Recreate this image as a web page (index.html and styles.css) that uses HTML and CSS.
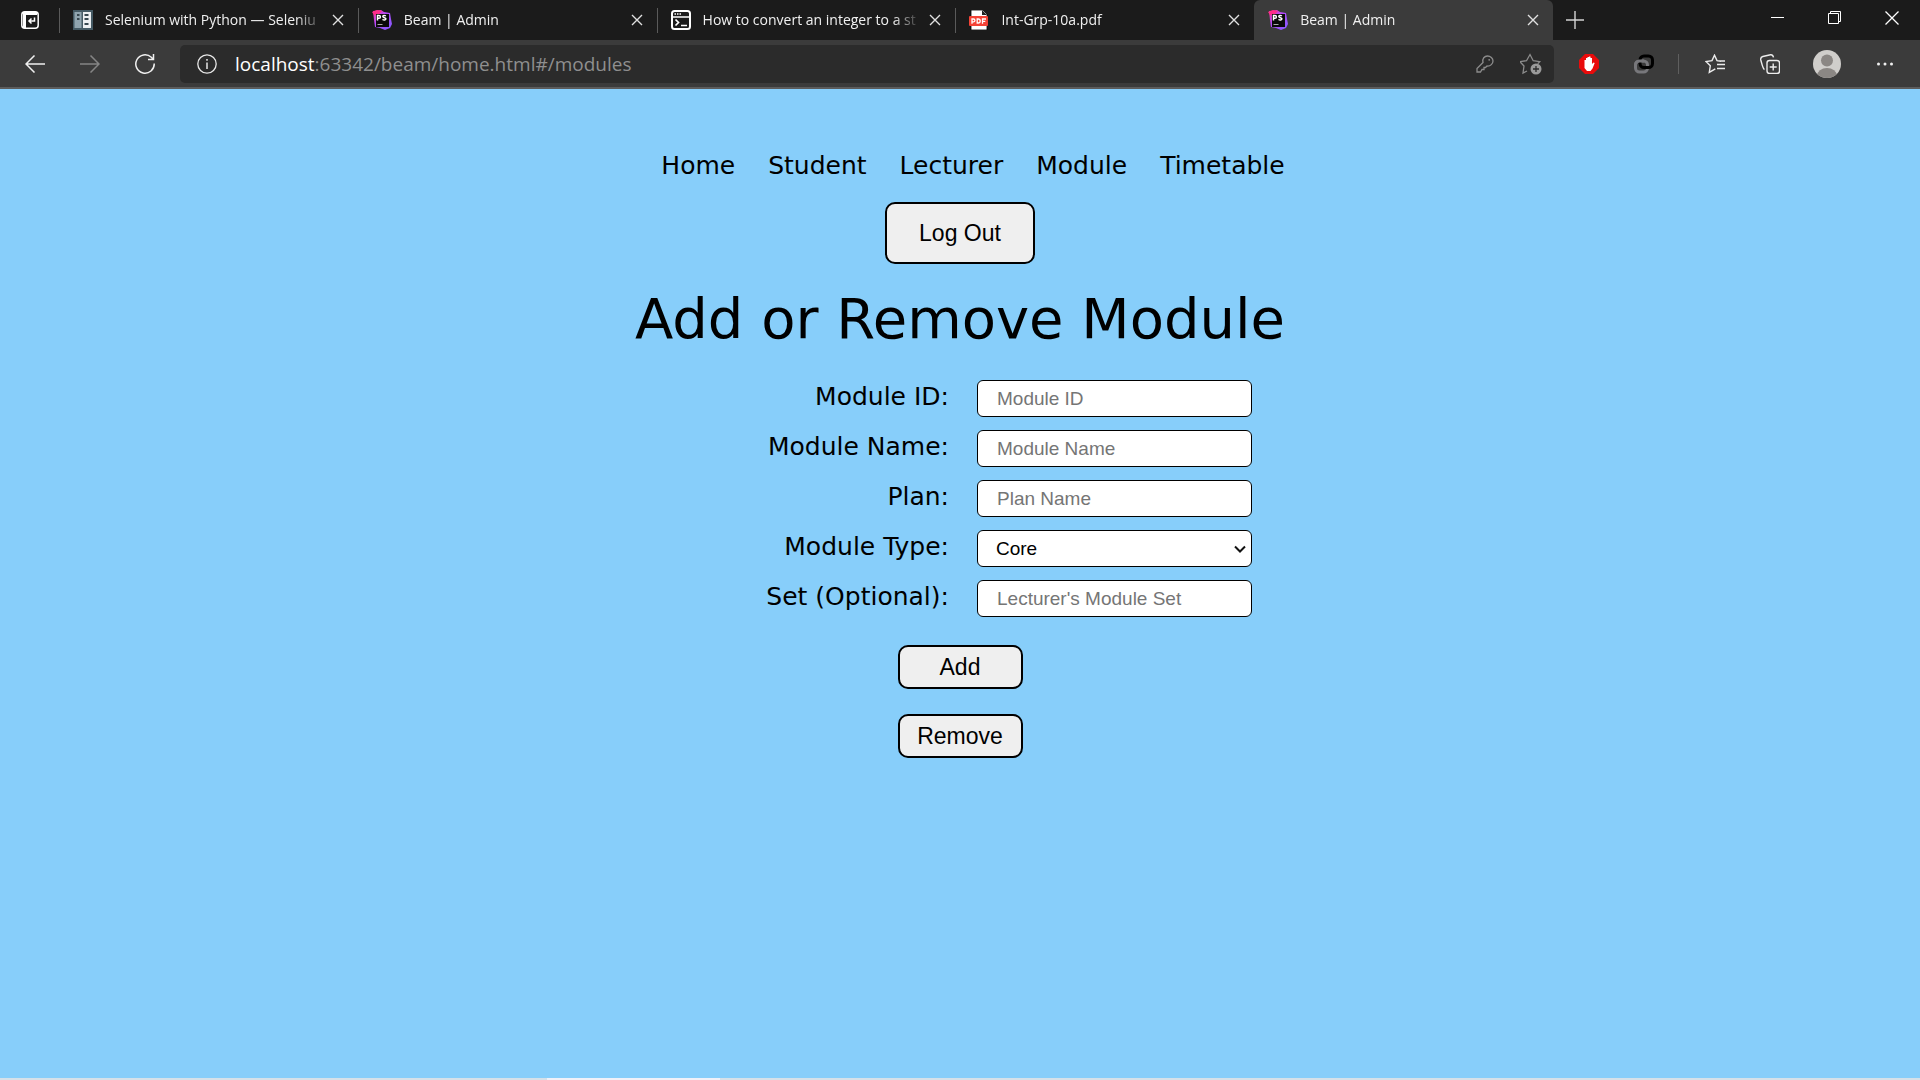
FILE: index.html
```html
<!DOCTYPE html>
<html lang="en">
<head>
<meta charset="utf-8">
<title>Beam | Admin</title>
<link rel="stylesheet" href="styles.css">
</head>
<body>
<svg class="defs" aria-hidden="true">
  <defs>
    <linearGradient id="ps-grad" x1="0" y1="0" x2="1" y2="1">
      <stop offset="0" stop-color="#ff318c"/><stop offset=".4" stop-color="#b74af7"/><stop offset="1" stop-color="#7f5cff"/>
    </linearGradient>
    <symbol id="i-close" viewBox="0 0 12 12"><path d="M1 1l10 10M11 1L1 11" fill="none" stroke="currentColor" stroke-width="1.4"/></symbol>
    <symbol id="i-storm" viewBox="0 0 20 20">
      <path d="M1 1l8-1 3 2 6 1 1 6 1 5-2 4-5 2-5-2-5-1-1-7z" fill="url(#ps-grad)"/>
      <path d="M0 2l5-2 5 1-4 4H2z" fill="#ff2d8a"/>
      <rect x="4" y="4" width="13" height="13" fill="#0a0a0a"/>
      <path d="M5.500 10.500v-5h1.500a1.400 1.400 0 0 1 0 2.800H5.500M13.800 6c-1-.8-3-.6-3 .6 0 1.400 3.100.8 3.100 2.200 0 1.400-2.100 1.500-3.400.5" fill="none" stroke="#fff" stroke-width="1.500"/>
      <path d="M5.500 14.500h5" stroke="#aaa" stroke-width="1"/>
    </symbol>
  </defs>
</svg>

<header class="browser">
  <div class="tabstrip">
    <button class="tab-menu" aria-label="Tab actions"><svg width="18" height="18" viewBox="0 0 18 18"><rect x=".8" y=".8" width="16.400" height="16.400" rx="3" fill="none" stroke="#fff" stroke-width="1.500"/><path d="M2 1h14v3H5v13H2z" fill="#fff"/><path d="M13.500 6.500v3.500H8M10.500 7.500L8 10l2.500 2.500" fill="none" stroke="#fff" stroke-width="1.500"/></svg></button>
    <div class="tabs">
      <div class="tab">
        <svg class="favicon" viewBox="0 0 20 20"><path fill="#455a64" d="M0 0h20v20H0z"/><path fill="#90a4ae" d="M1.500 2h7v16h-7z"/><path fill="#eceff1" d="M10 2h8v16h-8z"/><path fill="#37474f" d="M4 4h2.500v2H4zM4 8h2.500v2H4zM11.500 4h4v2h-4zM11.500 8h4v2h-4zM11.500 13h4v2h-4z"/></svg>
        <span class="tab-title">Selenium with Python — Seleniu</span>
        <button class="tab-close" aria-label="Close tab"><svg width="12" height="12"><use href="#i-close"/></svg></button>
      </div>
      <div class="tab">
        <svg class="favicon"><use href="#i-storm"/></svg>
        <span class="tab-title">Beam | Admin</span>
        <button class="tab-close" aria-label="Close tab"><svg width="12" height="12"><use href="#i-close"/></svg></button>
      </div>
      <div class="tab">
        <svg class="favicon" viewBox="0 0 20 20" fill="none" stroke="#fff"><rect x="1" y="1" width="18" height="18" rx="2.500" stroke-width="2"/><path d="M1 7h18" stroke-width="1.500"/><path d="M3.500 4h7" stroke-width="1.500" stroke-dasharray="1.500 1"/><path d="M4.500 9.500l3 3-3 3M10 15.500h6" stroke-width="1.700"/></svg>
        <span class="tab-title">How to convert an integer to a st</span>
        <button class="tab-close" aria-label="Close tab"><svg width="12" height="12"><use href="#i-close"/></svg></button>
      </div>
      <div class="tab">
        <svg class="favicon" viewBox="0 0 20 20"><path d="M2 0h12l4 4v16H2z" fill="#fff" stroke="#000" stroke-width=".8"/><path d="M13 0v5h5z" fill="#222"/><rect y="6" width="19" height="10" rx="1" fill="#f44336"/><path d="M3 13.800V9h1.500a1.300 1.300 0 0 1 0 2.800H3M8.200 9v4h1a1.800 1.800 0 0 0 0-4zM13.500 13.800V9H17M13.500 11.300h2.800" fill="none" stroke="#fff" stroke-width="1.300"/></svg>
        <span class="tab-title">Int-Grp-10a.pdf</span>
        <button class="tab-close" aria-label="Close tab"><svg width="12" height="12"><use href="#i-close"/></svg></button>
      </div>
      <div class="tab tab-active">
        <svg class="favicon"><use href="#i-storm"/></svg>
        <span class="tab-title">Beam | Admin</span>
        <button class="tab-close" aria-label="Close tab"><svg width="12" height="12"><use href="#i-close"/></svg></button>
      </div>
    </div>
    <button class="new-tab" aria-label="New tab"><svg width="18" height="18" viewBox="0 0 18 18"><path d="M9 0v18M0 9h18" stroke="#d4d4d4" stroke-width="1.400"/></svg></button>
    <div class="window-controls">
      <button aria-label="Minimize"><svg width="14" height="14" viewBox="0 0 14 14"><path d="M0 6.500h13" stroke="#fff"/></svg></button>
      <button aria-label="Restore"><svg width="14" height="14" viewBox="0 0 14 14" fill="none" stroke="#fff"><path d="M.5 2.500h10v10H.5zM2.500 2.500v-2h10v10h-2"/></svg></button>
      <button aria-label="Close window"><svg width="14" height="14" viewBox="0 0 14 14"><path d="M.5 .5l13 13M13.500 .5l-13 13" stroke="#fff" stroke-width="1.300"/></svg></button>
    </div>
  </div>

  <div class="toolbar">
    <button aria-label="Back"><svg width="20" height="18" viewBox="0 0 20 18" fill="none" stroke="#f0f0f0" stroke-width="1.500"><path d="M20 9H1M9.500 .5L1 9l8.500 8.500"/></svg></button>
    <button aria-label="Forward"><svg width="20" height="18" viewBox="0 0 20 18" fill="none" stroke="#858585" stroke-width="1.500"><path d="M0 9h19M10.500 .5L19 9l-8.500 8.500"/></svg></button>
    <button aria-label="Refresh"><svg width="20" height="20" viewBox="0 0 20 20" fill="none" stroke="#f0f0f0" stroke-width="1.500"><path d="M19.200 9.500A9.200 9.200 0 1 1 16.300 3.300L18 5M18.500 0v5.500H13"/></svg></button>
    <div class="address">
      <svg class="info" width="20" height="20" viewBox="0 0 20 20"><circle cx="10" cy="10" r="9.200" fill="none" stroke="#e8e8e8" stroke-width="1.300"/><path d="M10 8.500V15M10 5v1.800" stroke="#e8e8e8" stroke-width="1.500"/></svg>
      <span class="url"><span class="host">localhost</span>:63342/beam/home.html#/modules</span>
      <button class="address-action" aria-label="Saved passwords"><svg width="18" height="18" viewBox="0 0 18 18" fill="none" stroke="#8c8c8c" stroke-width="1.300"><path d="M7 7.500C6 3.500 8.500 1 11.500 1S17 3.500 17 6s-2.500 5.500-6 5L9.500 12.500H8v2H6L4.500 17H1v-3.500z"/><circle cx="13.200" cy="4.800" r=".9" fill="#8c8c8c" stroke="none"/></svg></button>
      <button class="address-action" aria-label="Add to favorites"><svg width="22" height="22" viewBox="0 0 22 22"><path d="M7 18l-4 2 1-7-4-4.300 6.500-1L10 1.500l3.200 6.200 6.500 1-2 2" fill="none" stroke="#8c8c8c" stroke-width="1.300"/><circle cx="16" cy="16" r="5.500" fill="#9a9a9a"/><path d="M16 13v6M13 16h6" stroke="#2b2b2b" stroke-width="1.300"/></svg></button>
    </div>
    <div class="extensions">
      <button aria-label="Ad blocker"><svg width="20" height="20" viewBox="0 0 20 20"><path d="M6 0h8l6 6v8l-6 6H6l-6-6V6z" fill="#e90b0b"/><path d="M5.500 6h1.500V4H8.500V3h1.500v-.5h1.500V4H13v6l1.500-1.500 1.200.5-2.200 5.500-2 2.500H8L5.500 14z" fill="#fff"/></svg></button>
      <button aria-label="Link extension"><svg width="20" height="20" viewBox="0 0 20 20" fill="none" stroke-width="3"><rect x="1.500" y="7" width="12" height="11" rx="4" stroke="#77777b"/><rect x="6" y="2" width="12.500" height="11.500" rx="4" stroke="#000"/><path d="M1.500 12v-1a4 4 0 0 1 4-4H10" stroke="#77777b"/></svg></button>
      <span class="divider"></span>
      <button aria-label="Favorites"><svg width="20" height="20" viewBox="0 0 20 20" fill="none" stroke="#ececec" stroke-width="1.400"><path d="M16 7.300l-4-.7L9.500 1.200 7 6.600l-6 .9 4.300 4.300-1 6.500 6-3.500M12 10.500h8M12 14.500h8M14 7h6"/></svg></button>
      <button aria-label="Collections"><svg width="20" height="20" viewBox="0 0 20 20" fill="none" stroke="#ececec" stroke-width="1.400"><rect x="7" y="6.500" width="12.500" height="13" rx="2.500"/><path d="M13.200 9.500v7M9.700 13h7M4.500 15.500C3 15 2.500 12.500 .8 6c-.4-2 .2-3 2-3.500L10.500 .8c1.500-.2 2.500.5 3 2.500"/></svg></button>
      <button class="profile" aria-label="Profile"><svg width="28" height="28" viewBox="0 0 28 28"><defs><clipPath id="face"><circle cx="14" cy="14" r="14"/></clipPath></defs><g clip-path="url(#face)"><path fill="#d0cecb" d="M0 0h28v28H0z"/><circle cx="14" cy="10.500" r="6" fill="#8b8784"/><ellipse cx="14" cy="26" rx="10" ry="8" fill="#8b8784"/></g></svg></button>
      <button aria-label="Settings and more"><svg width="18" height="4" viewBox="0 0 18 4" fill="#f0f0f0"><circle cx="2.500" cy="2" r="1.500"/><circle cx="9" cy="2" r="1.500"/><circle cx="15.500" cy="2" r="1.500"/></svg></button>
    </div>
  </div>
</header>

<main class="page">
  <nav class="site-nav">
    <a href="#/">Home</a>
    <a href="#/student">Student</a>
    <a href="#/lecturer">Lecturer</a>
    <a href="#/modules">Module</a>
    <a href="#/timetable">Timetable</a>
  </nav>
  <button class="btn btn-logout">Log Out</button>
  <h1>Add or Remove Module</h1>
  <form class="module-form">
    <div class="fields">
      <label for="module-id">Module ID:</label>
      <div class="field"><input id="module-id" type="text" placeholder="Module ID"></div>
      <label for="module-name">Module Name:</label>
      <div class="field"><input id="module-name" type="text" placeholder="Module Name"></div>
      <label for="plan">Plan:</label>
      <div class="field"><input id="plan" type="text" placeholder="Plan Name"></div>
      <label for="module-type">Module Type:</label>
      <div class="field"><select id="module-type"><option>Core</option><option>Optional</option></select><svg class="chevron" width="12" height="8" viewBox="0 0 12 8"><path d="M1 1.500l5 5 5-5" fill="none" stroke="#111" stroke-width="2"/></svg></div>
      <label for="module-set">Set (Optional):</label>
      <div class="field"><input id="module-set" type="text" placeholder="Lecturer's Module Set"></div>
    </div>
    <button class="btn" type="button">Add</button>
    <button class="btn" type="button">Remove</button>
  </form>
</main>
<footer class="edge"><span class="edge-light"></span></footer>
</body>
</html>
```
FILE: styles.css
```css
* {
  box-sizing: border-box;
}

body {
  margin: 0;
  min-height: 100vh;
  display: flex;
  flex-direction: column;
  background: #87cefa;
  color: #000;
  font-family: Verdana, "DejaVu Sans", sans-serif;
  font-size: 25px;
  line-height: 30px;
}

.defs {
  position: absolute;
  width: 0;
  height: 0;
}

/* Browser frame */
.browser {
  background: #3b3b3b;
  border-bottom: 2px solid #5c5c5c;
  font-family: "Segoe UI", "Open Sans", sans-serif;
}

.browser button {
  display: flex;
  align-items: center;
  justify-content: center;
  flex: none;
  padding: 0;
  border: 0;
  background: none;
  color: #e0e0e0;
}

.tabstrip {
  display: flex;
  height: 40px;
  background: #1b1b1b;
}

.browser .tab-menu {
  width: 59px;
}

.tabs {
  display: flex;
  flex: 0 1 1494px;
  min-width: 0;
}

.tab {
  display: flex;
  align-items: center;
  flex: 1 1 0;
  min-width: 0;
  padding: 0 10px 0 14px;
  background: linear-gradient(#5a5a5a, #5a5a5a) 0 8px / 1px 25px no-repeat;
}

.tab-active {
  border-radius: 6px 6px 0 0;
  background: #3b3b3b;
}

.favicon {
  flex: none;
  width: 20px;
  height: 20px;
}

.tab-title {
  flex: 1;
  min-width: 0;
  margin: 0 4px 0 12px;
  overflow: hidden;
  white-space: nowrap;
  color: #f0f0f0;
  font-size: 14px;
  line-height: 20px;
  mask-image: linear-gradient(to left, transparent, #000 28px);
}

.browser .tab-close {
  width: 20px;
  height: 20px;
}

.browser .new-tab {
  width: 44px;
}

.window-controls {
  display: flex;
  margin-left: auto;
}

.browser .window-controls button {
  width: 57px;
  height: 36px;
}

.toolbar {
  display: flex;
  align-items: center;
  height: 47px;
  padding: 0 8px 0 7px;
}

.browser .toolbar button {
  width: 55px;
  height: 40px;
}

.address {
  display: flex;
  align-items: center;
  flex: 1;
  min-width: 0;
  height: 38px;
  margin: 0 7px 0 8px;
  padding-left: 17px;
  border-radius: 5px;
  background: #2b2b2b;
}

.info {
  flex: none;
}

.url {
  flex: 1;
  min-width: 0;
  margin-left: 18px;
  overflow: hidden;
  white-space: nowrap;
  color: #8f8f8f;
  font-size: 19px;
  line-height: 30px;
}

.host {
  color: #fff;
}

.browser .toolbar .address-action {
  width: 46px;
}

.extensions {
  display: flex;
  align-items: center;
}

.divider {
  width: 1px;
  height: 20px;
  margin: 0 8px 0 7px;
  background: #5f5f5f;
}

.browser .toolbar .profile {
  width: 60px;
}

/* Module page */
.page {
  display: flex;
  flex: 1;
  flex-direction: column;
  align-items: center;
  padding: 62px 16px 48px;
}

.site-nav {
  display: flex;
  flex-wrap: wrap;
  gap: 8px 33px;
  padding-left: 26px;
}

.site-nav a {
  color: #000;
  text-decoration: none;
}

.btn {
  width: 125px;
  height: 44px;
  padding: 0;
  border: 2px solid #000;
  border-radius: 10px;
  background: #efefef;
  color: #000;
  font-family: Arial, "Liberation Sans", sans-serif;
  font-size: 23px;
}

.btn-logout {
  width: 150px;
  height: 62px;
  margin-top: 21px;
}

h1 {
  margin: 22px 0 28px;
  font-size: 56px;
  font-weight: 400;
  line-height: 66px;
}

.module-form {
  display: flex;
  flex-direction: column;
  align-items: center;
  gap: 25px;
  width: 100%;
}

.fields {
  display: grid;
  grid-template-columns: 1fr 1fr;
  gap: 13px 28px;
  width: 100%;
  padding-left: 6px;
  margin-bottom: 3px;
}

.fields label {
  padding-top: 2px;
  text-align: right;
}

.field {
  position: relative;
  width: 275px;
  height: 37px;
}

.field input,
.field select {
  width: 100%;
  height: 100%;
  padding: 0 19px;
  border: 1px solid #000;
  border-radius: 6px;
  background: #fff;
  color: #000;
  font-family: Arial, "Liberation Sans", sans-serif;
  font-size: 19px;
  appearance: none;
}

.field select {
  padding: 0 18px;
}

.field input::placeholder {
  color: #757575;
}

.chevron {
  position: absolute;
  right: 6px;
  top: 15px;
  pointer-events: none;
}

/* Taskbar edge along the bottom of the screen */
.edge {
  height: 2px;
  background: #d5e1e9;
}

.edge-light {
  display: block;
  width: 9%;
  height: 2px;
  margin-left: 28.500%;
  background: #f0f1f8;
}
```
